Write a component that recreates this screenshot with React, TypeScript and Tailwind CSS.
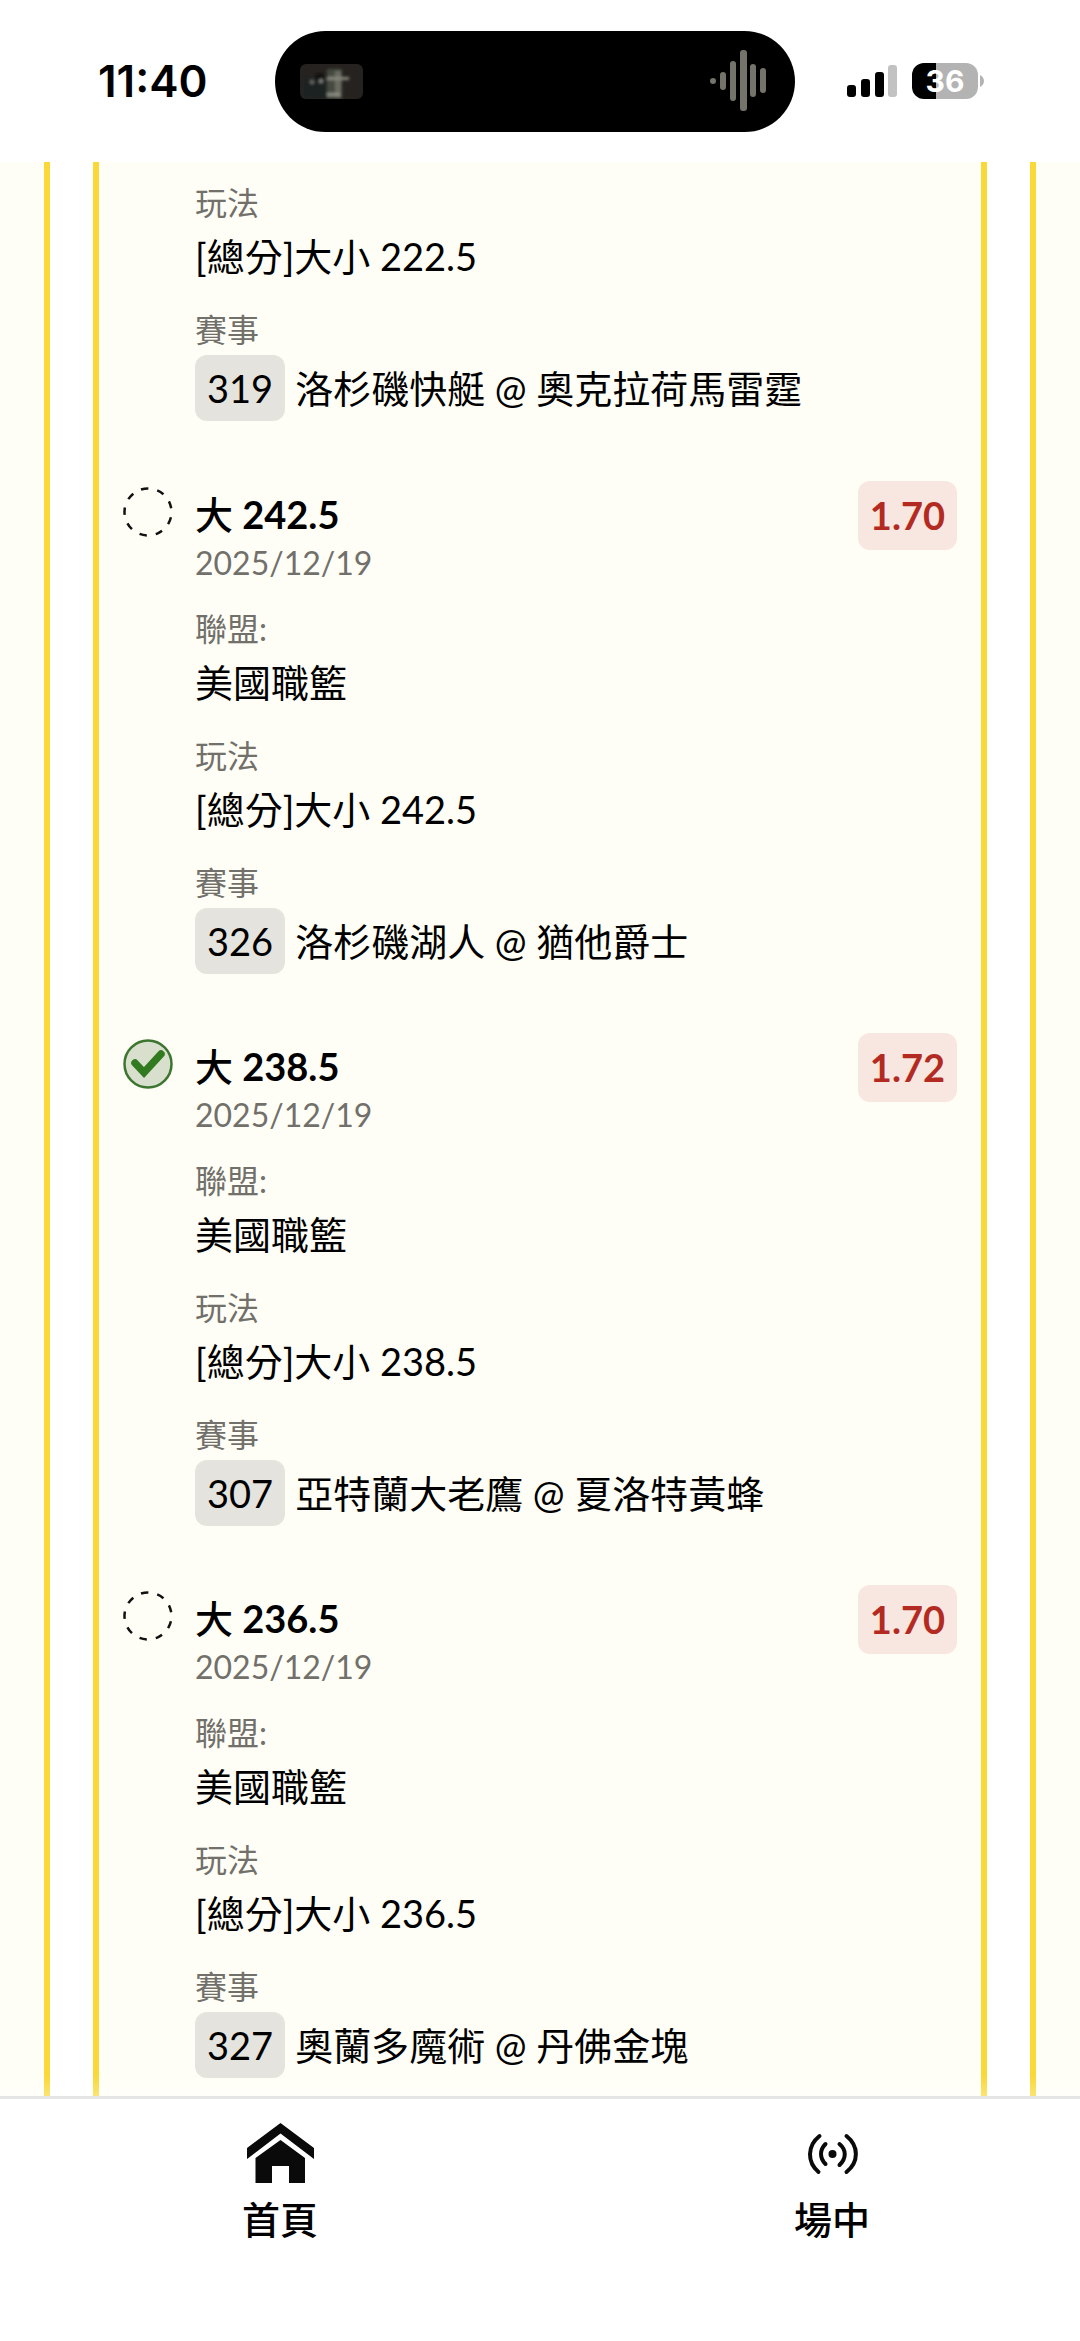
import React from 'react';

type LegStatus = 'pending' | 'won';

interface Leg {
  id: string;
  pick: string;
  line: string;
  date: string;
  odds: string;
  status: LegStatus;
  league: string;
  teams: string;
}

const legs: Leg[] = [
  {
    id: '326',
    pick: '大',
    line: '242.5',
    date: '2025/12/19',
    odds: '1.70',
    status: 'pending',
    league: '美國職籃',
    teams: '洛杉磯湖人 @ 猶他爵士',
  },
  {
    id: '307',
    pick: '大',
    line: '238.5',
    date: '2025/12/19',
    odds: '1.72',
    status: 'won',
    league: '美國職籃',
    teams: '亞特蘭大老鷹 @ 夏洛特黃蜂',
  },
  {
    id: '327',
    pick: '大',
    line: '236.5',
    date: '2025/12/19',
    odds: '1.70',
    status: 'pending',
    league: '美國職籃',
    teams: '奧蘭多魔術 @ 丹佛金塊',
  },
];

function WaveIcon() {
  return (
    <svg className="h-[62px] w-[57px]" viewBox="0 0 57 62" fill="#74746a">
      <circle cx="3" cy="31" r="3" />
      <rect x="10" y="22" width="6" height="18" rx="3" />
      <rect x="20" y="11" width="6" height="40" rx="3" />
      <rect x="30" y="0" width="7" height="61" rx="3" />
      <rect x="40" y="14" width="6" height="33" rx="3" />
      <rect x="50" y="18" width="6" height="25" rx="3" />
    </svg>
  );
}

function SignalIcon() {
  return (
    <svg className="h-8 w-[50px]" viewBox="0 0 50 32">
      <rect x="0" y="20" width="9" height="12" rx="3" />
      <rect x="14" y="14" width="9" height="18" rx="3" />
      <rect x="28" y="7" width="9" height="25" rx="3" />
      <rect x="41" y="0" width="9" height="32" rx="3" fill="#c2c2c2" />
    </svg>
  );
}

function Battery() {
  return (
    <div className="flex items-center gap-[2px]">
      <div className="flex h-9 w-[66px] items-center justify-center rounded-xl bg-linear-to-r from-black from-36% to-[#b3b3b3] to-36% font-['Inter',sans-serif] text-[30px] leading-9 font-bold text-white">
        36
      </div>
      <svg className="h-3 w-1" viewBox="0 0 4 12" fill="#b3b3b3">
        <path d="M0 0C2 1 4 3 4 6s-2 5-4 6z" />
      </svg>
    </div>
  );
}

function StatusBar() {
  return (
    <header className="flex h-[162px] items-center bg-white pr-24 pl-[98px]">
      <time className="w-[177px] font-['Inter',sans-serif] text-[44px] leading-[56px] font-semibold">
        11:40
      </time>
      <div className="flex h-[101px] flex-1 items-center justify-between rounded-full bg-black pr-7 pl-[25px]">
        <svg className="h-[35px] w-[63px]" viewBox="0 0 63 35">
          <defs>
            <clipPath id="thumb">
              <rect width="63" height="35" rx="6" />
            </clipPath>
            <filter id="soft">
              <feGaussianBlur stdDeviation="1.500" />
            </filter>
          </defs>
          <g clipPath="url(#thumb)">
            <rect width="63" height="35" fill="#26221f" />
            <g filter="url(#soft)">
              <rect x="3" y="14" width="28" height="21" fill="#1b2022" />
              <rect x="27" y="5" width="15" height="30" fill="#45483f" />
              <rect x="35" y="7" width="6" height="26" fill="#6a6c62" />
              <rect x="27" y="13" width="22" height="3" fill="#85877c" />
              <rect x="16" y="10" width="8" height="7" fill="#0e1011" />
              <circle cx="12" cy="18" r="2" fill="#6f716c" />
              <circle cx="21" cy="17" r="2" fill="#8a8c86" />
              <rect x="27" y="29" width="13" height="3" fill="#8b8d82" />
            </g>
          </g>
        </svg>
        <WaveIcon />
      </div>
      <div className="ml-[52px] flex items-center gap-[15px]">
        <SignalIcon />
        <Battery />
      </div>
    </header>
  );
}

function StatusIcon({ status }: { status: LegStatus }) {
  if (status === 'won') {
    return (
      <svg className="size-[50px]" viewBox="0 0 50 50" fill="none">
        <circle cx="25" cy="25" r="23.500" fill="#d9dfcd" stroke="#3c7530" strokeWidth="2.500" />
        <path d="M12 24l9 9.500L38 15" stroke="#317a20" strokeWidth="7.500" strokeLinecap="round" />
      </svg>
    );
  }
  return (
    <svg className="size-[50px]" viewBox="0 0 50 50" fill="none">
      <circle
        cx="25"
        cy="25"
        r="23.500"
        stroke="#111"
        strokeWidth="2.500"
        pathLength={180}
        strokeDasharray="9 11"
        transform="rotate(-27 25 25)"
      />
    </svg>
  );
}

function Label({ children }: { children: React.ReactNode }) {
  return <dt className="text-[32px] leading-[48px] text-[#71706b]">{children}</dt>;
}

function Field({ label, value }: { label: string; value: string }) {
  return (
    <div>
      <Label>{label}</Label>
      <dd className="text-[38px] leading-[58px]">{value}</dd>
    </div>
  );
}

function Match({ id, teams }: { id: string; teams: string }) {
  return (
    <div>
      <Label>賽事</Label>
      <dd className="flex items-center gap-[10px] pt-px text-[38px] leading-[58px]">
        <span className="rounded-xl bg-[#e5e3dd] px-3 py-1">{id}</span>
        {teams}
      </dd>
    </div>
  );
}

function LegRow({ leg }: { leg: Leg }) {
  return (
    <li className="flex items-start gap-[22px]">
      <div className="pt-[6px]">
        <StatusIcon status={leg.status} />
      </div>
      <div className="flex-1 pt-2">
        <h3 className="text-[38px] leading-[50px] font-bold">
          <span className="font-medium">{leg.pick}</span> {leg.line}
        </h3>
        <p className="text-[32px] leading-[48px] text-[#71706b]">{leg.date}</p>
        <dl className="mt-[18px] flex flex-col gap-[21px]">
          <Field label="聯盟:" value={leg.league} />
          <Field label="玩法" value={`[總分]大小 ${leg.line}`} />
          <Match id={leg.id} teams={leg.teams} />
        </dl>
      </div>
      <span className="rounded-xl bg-[#f8e7e0] px-3 py-[6px] text-[38px] leading-[57px] font-bold text-[#b32a22]">
        {leg.odds}
      </span>
    </li>
  );
}

function NavBar() {
  return (
    <nav className="flex justify-between border-t-3 border-[#e5e5e5] bg-white pt-6 pr-[198px] pb-[90px] pl-[230px] text-[38px] leading-[56px] font-medium">
      <a href="#home" className="flex w-[100px] flex-col items-center gap-2">
        <svg className="h-[60px] w-[67px]" viewBox="0 0 67 60" fill="#0a0a0a">
          <path d="M33.500 0L67 25v11L33.500 10.500 0 36V25z" />
          <path d="M33.500 17L58 35v25H42V43H25v17H8.500V35z" />
        </svg>
        首頁
      </a>
      <a href="#live" className="flex w-[100px] flex-col items-center gap-2">
        <svg
          className="h-[60px] w-[67px]"
          viewBox="0 0 67 60"
          fill="none"
          stroke="#0a0a0a"
          strokeWidth="4"
          strokeLinecap="round"
        >
          <circle cx="33.500" cy="31" r="4" fill="#0a0a0a" stroke="none" />
          <path d="M20.500 13C8 23 8 39 19.500 49M47.500 13C60 23 60 39 47.500 49" />
          <path d="M26.500 21c-6 6-6 14 0 20M40.500 21c7 6 7 14 0 21" />
        </svg>
        場中
      </a>
    </nav>
  );
}

export default function App() {
  return (
    <div
      lang="zh-Hant"
      className="flex min-h-screen flex-col bg-white font-['Lato','Noto_Sans_CJK_TC',sans-serif] text-black"
    >
      <StatusBar />
      <main className="relative bg-[#fffef6] px-11">
        <div className="border-x-6 border-[#f9d838] bg-white px-[43px]">
          <div className="border-x-6 border-[#f9d838] bg-[#fffef6] px-6 pt-[17px] pb-[18px]">
            <dl className="mb-[60px] flex flex-col gap-[21px] pl-[72px]">
              <Field label="玩法" value="[總分]大小 222.5" />
              <Match id="319" teams="洛杉磯快艇 @ 奧克拉荷馬雷霆" />
            </dl>
            <ul className="flex flex-col gap-[59px]">
              {legs.map((leg) => (
                <LegRow key={leg.id} leg={leg} />
              ))}
            </ul>
          </div>
        </div>
        <div className="absolute inset-x-0 bottom-0 h-5 bg-linear-to-t from-white/30 to-transparent" />
      </main>
      <NavBar />
    </div>
  );
}
